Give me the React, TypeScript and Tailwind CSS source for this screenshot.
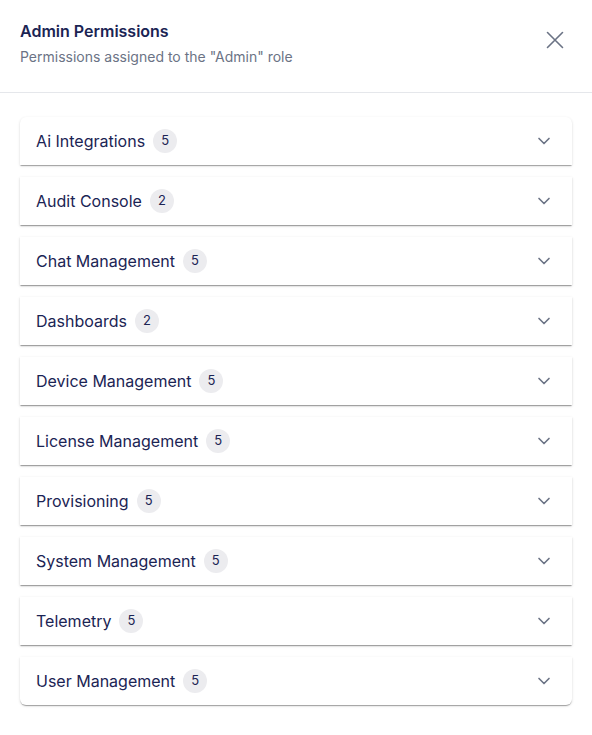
import React from "react";

const items: [string, number][] = [
  ["Ai Integrations", 5],
  ["Audit Console", 2],
  ["Chat Management", 5],
  ["Dashboards", 2],
  ["Device Management", 5],
  ["License Management", 5],
  ["Provisioning", 5],
  ["System Management", 5],
  ["Telemetry", 5],
  ["User Management", 5],
];

export default function App() {
  return (
    <div
      className="w-[592px] h-[735px] bg-white"
      style={{ fontFamily: "Inter, 'Noto Sans', sans-serif" }}
    >
      <div className="flex items-start justify-between border-b border-[#e5e7eb] h-[93px] pl-5 pr-[28px] pt-[21px]">
        <div className="flex flex-col">
          <h2 className="text-[16px] leading-[20px] font-semibold text-[#1b2454]">Admin Permissions</h2>
          <p className="mt-[7px] text-[14px] leading-[18px] text-[#6b7385]">
            Permissions assigned to the "Admin" role
          </p>
        </div>
        <button className="mt-[10px] w-[18px] h-[18px] flex items-center justify-center text-[#6b7385]">
          <svg width="18" height="18" viewBox="0 0 18 18" fill="none" stroke="currentColor" strokeWidth="1.6" strokeLinecap="round">
            <path d="M1.5 1.5 L16.5 16.5 M16.5 1.5 L1.5 16.5" />
          </svg>
        </button>
      </div>
      <div className="flex flex-col gap-3 px-5 pt-6">
        {items.map(([name, count], i) => (
          <div
            key={name}
            className={`bg-white h-[48px] flex items-center pl-4 pr-[18px] shadow-[0px_2px_1px_-1px_rgba(0,0,0,0.2),0px_1px_1px_0px_rgba(0,0,0,0.14),0px_1px_3px_0px_rgba(0,0,0,0.12)] ${
              i === 0 ? "rounded-t-[6px]" : ""
            } ${i === items.length - 1 ? "rounded-b-[6px]" : ""}`}
          >
            <span className="text-[16px] text-[#1b2454]">{name}</span>
            <span className="ml-2 w-6 h-6 rounded-full bg-[#ececef] text-[#1b2454] text-[13px] font-normal flex items-center justify-center">
              {count}
            </span>
            <div className="flex-1" />
            <svg width="20" height="20" viewBox="0 0 24 24" fill="none" stroke="#6b7385" strokeWidth="2" strokeLinecap="round" strokeLinejoin="round">
              <path d="m6 9 6 6 6-6" />
            </svg>
          </div>
        ))}
      </div>
    </div>
  );
}
